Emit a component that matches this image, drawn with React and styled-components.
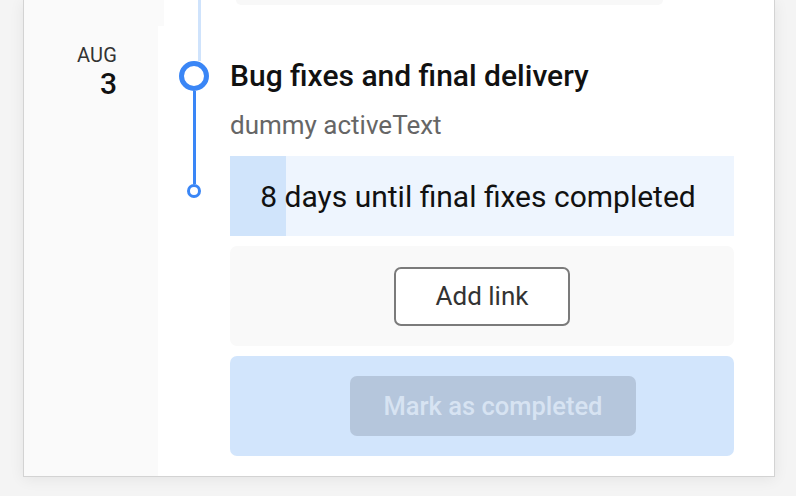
import React from "react";
import styled, { createGlobalStyle } from "styled-components";

const Global = createGlobalStyle`
  html, body { margin: 0; padding: 0; }
  body {
    background: #f4f4f4;
    font-family: Roboto, "Noto Sans", "Liberation Sans", sans-serif;
    overflow: hidden;
    height: 496px;
  }
`;

const Page = styled.div`
  width: 796px;
  height: 496px;
  box-sizing: border-box;
  padding: 0 21px 19px 23px;
  display: flex;
  flex-direction: column;
  justify-content: flex-end;
`;

const Card = styled.div`
  background: #fff;
  border: 1px solid #d3d3d3;
  border-top: none;
  box-shadow: 0 2px 14px rgba(0, 0, 0, 0.07);
  display: flex;
  flex-direction: column;
`;

const Row = styled.div`
  display: flex;
  height: ${(p) => (p.$height ? `${p.$height}px` : "auto")};
`;

const DateCol = styled.div`
  width: ${(p) => p.$width}px;
  flex: none;
  background: #fafafa;
  box-sizing: border-box;
  padding: 18px 41px 0 0;
  display: flex;
  flex-direction: column;
  align-items: flex-end;
  color: #222;
`;

const Month = styled.div`
  font-size: 20px;
  line-height: 23px;
  color: #333;
  letter-spacing: 0.2px;
`;

const Day = styled.div`
  font-size: 30px;
  line-height: 34px;
  font-weight: 500;
  color: #111;
`;

const Timeline = styled.div`
  width: 72px;
  flex: none;
  display: flex;
  flex-direction: column;
  align-items: center;
`;

const Connector = styled.div`
  width: 3px;
  height: ${(p) => p.$height}px;
  background: #cfe3fc;
  align-self: flex-start;
  margin-left: ${(p) => p.$offset}px;
  flex: none;
`;

const BigDot = styled.div`
  width: 30px;
  height: 30px;
  box-sizing: border-box;
  border: 5px solid #3a86f6;
  border-radius: 50%;
  background: #fff;
  flex: none;
`;

const ActiveLine = styled.div`
  width: 3px;
  height: 93px;
  background: #3a86f6;
  flex: none;
`;

const SmallDot = styled.div`
  width: 14px;
  height: 14px;
  box-sizing: border-box;
  border: 3px solid #3a86f6;
  border-radius: 50%;
  background: #fff;
  flex: none;
`;

const Content = styled.div`
  flex: 1;
  box-sizing: border-box;
  padding: ${(p) => p.$pad};
  display: flex;
  flex-direction: column;
`;

const PrevTail = styled.div`
  width: 427px;
  height: 5px;
  background: #f8f8f8;
  border-radius: 0 0 8px 8px;
`;

const Title = styled.div`
  font-size: 30px;
  line-height: 34px;
  font-weight: 500;
  color: #111;
`;

const Subtitle = styled.div`
  margin-top: 17px;
  font-size: 26px;
  line-height: 30px;
  color: #666;
`;

const Progress = styled.div`
  margin-top: 16px;
  height: 80px;
  position: relative;
  background: #eef5fe;
  display: flex;
  align-items: center;
  justify-content: center;
  padding-right: 8px;
  font-size: 30px;
  color: #111;
  overflow: hidden;
`;

const ProgressFill = styled.div`
  position: absolute;
  left: 0;
  top: 0;
  bottom: 0;
  background: #d0e4fb;
`;

const ProgressText = styled.span`
  position: relative;
`;

const Panel = styled.div`
  margin-top: 10px;
  height: 100px;
  border-radius: 7px;
  background: ${(p) => p.$bg};
  display: flex;
  align-items: center;
  justify-content: center;
`;

const OutlineButton = styled.button`
  width: 176px;
  height: 59px;
  box-sizing: border-box;
  border: 2px solid #7b7b7b;
  border-radius: 7px;
  background: #fff;
  font-family: inherit;
  font-size: 26px;
  color: #333;
  padding: 0;
`;

const DisabledButton = styled.button`
  width: 286px;
  height: 60px;
  margin-left: 22px;
  border: none;
  border-radius: 7px;
  background: #b5c6dc;
  font-family: inherit;
  font-size: 25.5px;
  font-weight: 500;
  color: #d7e3f2;
  padding: 0;
`;

export default function App() {
  const progress = 56 / 504;
  return (
    <>
      <Global />
      <Page>
        <Card>
          <Row $height={26}>
            <DateCol $width={140} />
            <Timeline>
              <Connector $height={26} $offset={34} />
            </Timeline>
            <Content $pad="0">
              <PrevTail />
            </Content>
          </Row>
          <Row>
            <DateCol $width={134}>
              <Month>AUG</Month>
              <Day>3</Day>
            </DateCol>
            <Timeline>
              <Connector $height={35} $offset={40} />
              <BigDot />
              <ActiveLine />
              <SmallDot />
            </Timeline>
            <Content $pad="33px 40px 20px 0">
              <Title>Bug fixes and final delivery</Title>
              <Subtitle>dummy activeText</Subtitle>
              <Progress>
                <ProgressFill style={{ width: `${progress * 100}%` }} />
                <ProgressText>8 days until final fixes completed</ProgressText>
              </Progress>
              <Panel $bg="#f9f9f9">
                <OutlineButton>Add link</OutlineButton>
              </Panel>
              <Panel $bg="#d2e5fc">
                <DisabledButton disabled>Mark as completed</DisabledButton>
              </Panel>
            </Content>
          </Row>
        </Card>
      </Page>
    </>
  );
}
